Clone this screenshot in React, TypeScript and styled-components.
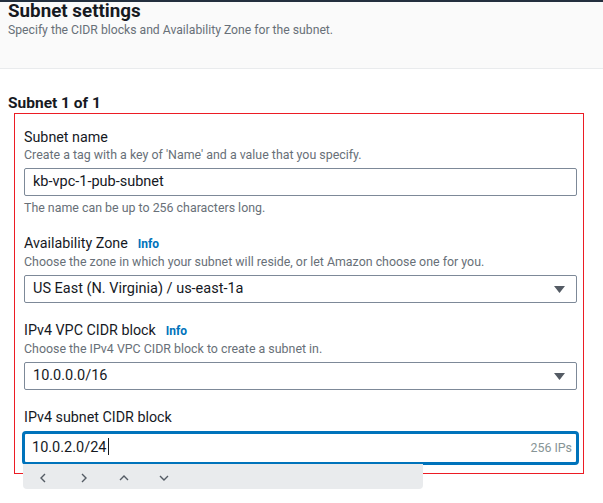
import React from "react";
import styled, { createGlobalStyle } from "styled-components";

const GlobalStyle = createGlobalStyle`
  body {
    margin: 0;
    background: #fff;
    font-family: Roboto, "Liberation Sans", sans-serif;
    color: #16191f;
  }
`;

const App = () => {
  return (
    <Page>
      <GlobalStyle />
      <TopStrip />
      <Header>
        <Title>Subnet settings</Title>
        <Subtitle>Specify the CIDR blocks and Availability Zone for the subnet.</Subtitle>
      </Header>
      <Content>
        <SectionHeading>Subnet 1 of 1</SectionHeading>
        <Highlight>
          <Field>
            <Label>Subnet name</Label>
            <Hint>Create a tag with a key of 'Name' and a value that you specify.</Hint>
            <Control>kb-vpc-1-pub-subnet</Control>
            <Constraint>The name can be up to 256 characters long.</Constraint>
          </Field>

          <Field>
            <Label>
              Availability Zone <InfoLink>Info</InfoLink>
            </Label>
            <Hint>Choose the zone in which your subnet will reside, or let Amazon choose one for you.</Hint>
            <Control>
              <span>US East (N. Virginia) / us-east-1a</span>
              <Caret />
            </Control>
          </Field>

          <Field>
            <Label>
              IPv4 VPC CIDR block <InfoLink>Info</InfoLink>
            </Label>
            <Hint>Choose the IPv4 VPC CIDR block to create a subnet in.</Hint>
            <Control>
              <span>10.0.0.0/16</span>
              <Caret />
            </Control>
          </Field>

          <Field>
            <Label>IPv4 subnet CIDR block</Label>
            <Control $focused>
              <span>
                10.0.2.0/24
                <TextCursor />
              </span>
              <Suffix>256 IPs</Suffix>
            </Control>
            <Stepper>
              <StepButton aria-label="previous">
                <Chevron points="7,2 3,6 7,10" />
              </StepButton>
              <StepButton aria-label="next">
                <Chevron points="4,2 8,6 4,10" />
              </StepButton>
              <StepButton aria-label="up">
                <Chevron points="2,8 6,4 10,8" />
              </StepButton>
              <StepButton aria-label="down">
                <Chevron points="2,4 6,8 10,4" />
              </StepButton>
            </Stepper>
          </Field>
        </Highlight>
      </Content>
    </Page>
  );
};

function Chevron({ points }: { points: string }) {
  return (
    <svg width="12" height="12" viewBox="0 0 12 12">
      <polyline points={points} fill="none" stroke="#545b64" strokeWidth="1.4" />
    </svg>
  );
}

function Caret() {
  return (
    <CaretIcon width="11" height="7" viewBox="0 0 11 7">
      <polygon points="0,0 11,0 5.5,7" fill="#545b64" />
    </CaretIcon>
  );
}

const Page = styled.main`
  width: 603px;
  min-height: 503px;
`;

const TopStrip = styled.div`
  height: 2px;
  background: #232f3e;
`;

const Header = styled.header`
  background: #fafafa;
  border-bottom: 1px solid #e9ebed;
  padding: 0 8px 30px;
`;

const Title = styled.h2`
  margin: 0;
  font-size: 18.8px;
  line-height: 18px;
  font-weight: 700;
  color: #16191f;
`;

const Subtitle = styled.p`
  margin: 2px 0 0;
  font-size: 12.2px;
  line-height: 16px;
  color: #687078;
`;

const Content = styled.section`
  padding: 0 8px;
`;

const SectionHeading = styled.h3`
  margin: 24px 0 0;
  font-size: 15.5px;
  line-height: 20px;
  font-weight: 700;
  color: #16191f;
`;

const Highlight = styled.div`
  margin: 0 11px 0 6px;
  border: 1px solid #ec1c24;
  padding: 13px 6px 8px 9px;
  display: flex;
  flex-direction: column;
  gap: 17px;
`;

const Field = styled.div`
  position: relative;
  display: flex;
  flex-direction: column;
`;

const Label = styled.label`
  display: flex;
  align-items: baseline;
  gap: 10px;
  font-size: 14.3px;
  line-height: 20px;
  color: #16191f;
`;

const InfoLink = styled.a`
  font-size: 12px;
  font-weight: 700;
  color: #0073bb;
`;

const Hint = styled.div`
  font-size: 12.4px;
  line-height: 16px;
  color: #687078;
`;

const Constraint = styled(Hint)`
  margin-top: 4px;
`;

const Control = styled.div<{ $focused?: boolean }>`
  box-sizing: border-box;
  display: flex;
  align-items: center;
  justify-content: space-between;
  height: ${(p) => (p.$focused ? "34px" : "28px")};
  margin: ${(p) => (p.$focused ? "4px -2px 0" : "5px 0 0")};
  padding: ${(p) => (p.$focused ? "0 4px 0 7px" : "0 8px")};
  border: ${(p) => (p.$focused ? "3px solid #0073bb" : "1px solid #7d8998")};
  border-radius: ${(p) => (p.$focused ? "4px" : "2px")};
  background: #fff;
  font-size: 14.5px;
  line-height: 20px;
  color: #16191f;
`;

const CaretIcon = styled.svg`
  margin-right: 3px;
`;

const TextCursor = styled.span`
  display: inline-block;
  width: 1px;
  height: 17px;
  margin-left: 1px;
  background: #16191f;
  vertical-align: -3px;
`;

const Suffix = styled.span`
  font-size: 12.4px;
  color: #879596;
`;

const Stepper = styled.div`
  position: absolute;
  top: calc(100% - 1px);
  left: -1px;
  width: 400px;
  height: 25px;
  box-sizing: border-box;
  padding-left: 1px;
  display: flex;
  align-items: center;
  background: #e9ebed;
  border-radius: 0 0 4px 4px;
`;

const StepButton = styled.span`
  width: 40px;
  display: flex;
  justify-content: center;
  padding-top: 3px;
`;

export default App;
